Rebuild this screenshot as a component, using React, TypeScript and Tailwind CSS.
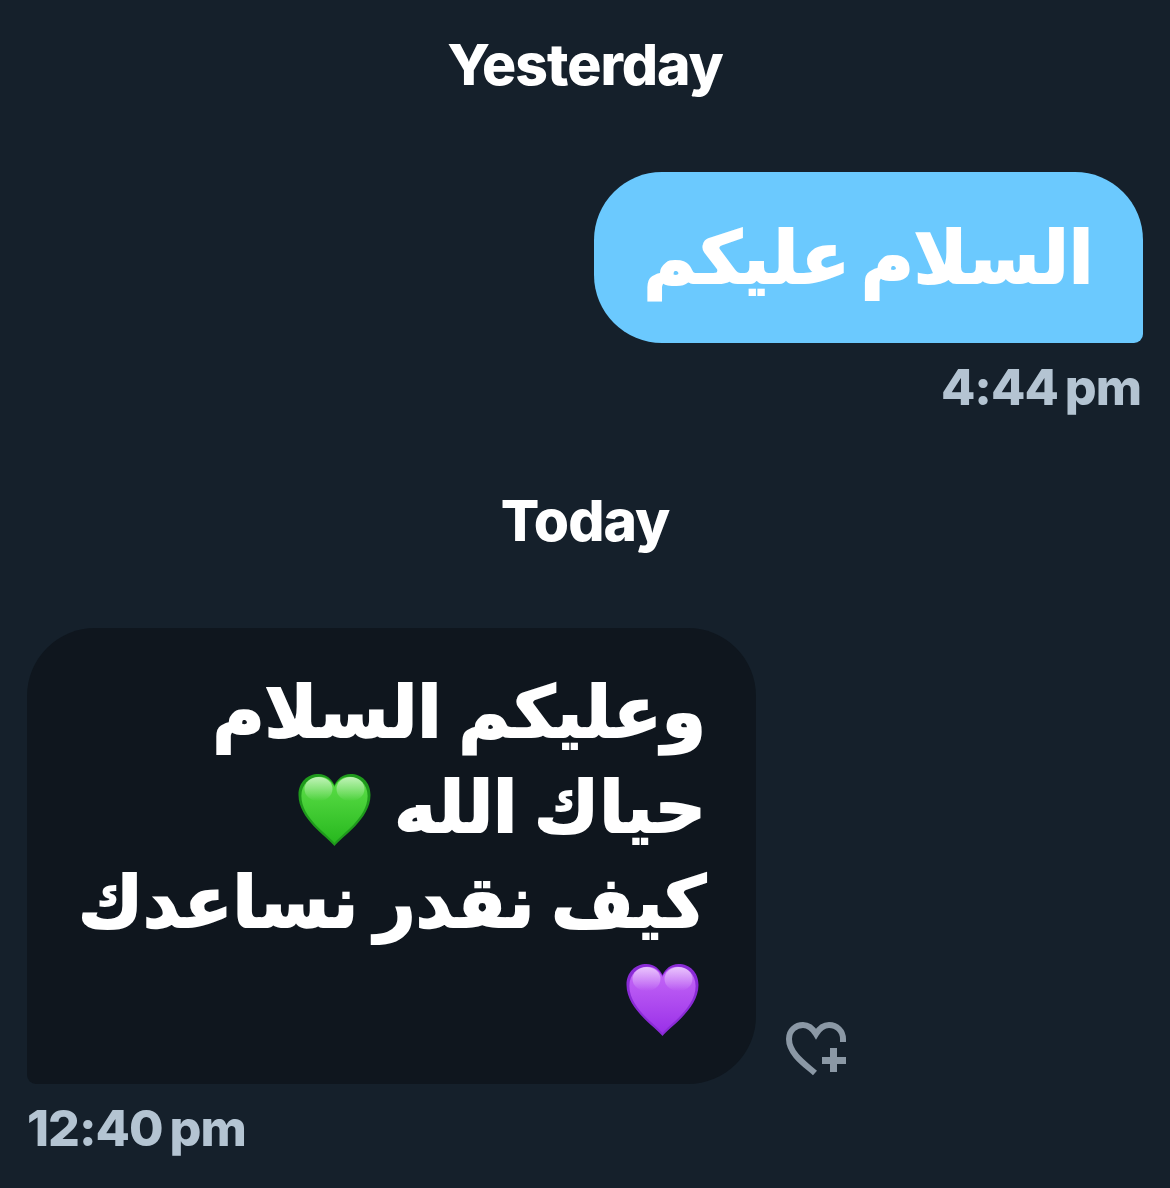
import React from "react";

const HEART = "M37 73C30 64 1 46 1 22C1 9 10 1 21 1C29 1 34 6 37 12C40 6 45 1 53 1C64 1 73 9 73 22C73 46 44 64 37 73Z";

function Heart({ edge, from, to, id, className }: { edge: string; from: string; to: string; id: string; className: string }) {
  return (
    <svg viewBox="0 0 74 74" className={className}>
      <defs>
        <linearGradient id={id} x1="0" y1="0" x2="0" y2="1">
          <stop offset="0" stopColor={from} />
          <stop offset="1" stopColor={to} />
        </linearGradient>
        <linearGradient id={`${id}h`} x1="0" y1="0" x2="0" y2="1">
          <stop offset="0" stopColor="#ffffff" stopOpacity="0.6" />
          <stop offset="1" stopColor="#ffffff" stopOpacity="0" />
        </linearGradient>
      </defs>
      <path d={HEART} fill={edge} />
      <path d={HEART} fill={`url(#${id})`} transform="translate(37 35) scale(0.92 0.92) translate(-37 -35)" />
      <ellipse cx="21" cy="16" rx="14" ry="12" fill={`url(#${id}h)`} />
      <ellipse cx="53" cy="16" rx="14" ry="12" fill={`url(#${id}h)`} />
    </svg>
  );
}

export default function App() {
  return (
    <div
      className="w-[1170px] h-[1188px] bg-[#15202b] overflow-hidden flex flex-col text-white"
      style={{ fontFamily: '"Inter","Noto Sans","DejaVu Sans",sans-serif' }}
    >
      <div className="mt-[32px] h-[64px] flex items-center justify-center text-[57px] font-extrabold leading-none tracking-[-1px]">Yesterday</div>
      <div
        className="mt-[76px] mr-[27px] self-end w-[549px] h-[171px] bg-[#6bc9fe] rounded-[68px] rounded-br-[9px] flex items-center justify-center text-[72px] font-bold [word-spacing:-14px] [-webkit-text-stroke:2px_white]"
        dir="rtl"
        style={{ fontFamily: '"DejaVu Sans",sans-serif' }}
      >
        السلام عليكم
      </div>
      <div className="mt-[12px] mr-[29px] self-end text-[#b4c4d2] text-[50px] font-extrabold leading-[64px] tracking-[-1px] [word-spacing:-3px]">4:44 pm</div>
      <div className="mt-[69px] h-[64px] flex items-center justify-center text-[57px] font-extrabold leading-none tracking-[-1px]">Today</div>
      <div className="mt-[76px] ml-[27px] flex items-end">
        <div
          className="w-[729px] h-[456px] bg-[#0f161e] rounded-[68px] rounded-bl-[9px] pr-[50px] pt-[37px] text-[71px] font-bold leading-[95px] [word-spacing:-8px] [-webkit-text-stroke:2px_white]"
          dir="rtl"
          style={{ fontFamily: '"DejaVu Sans",sans-serif' }}
        >
          <div className="h-[95px]">وعليكم السلام</div>
          <div className="h-[95px] flex items-center gap-[22px]">
            حياك الله
            <Heart id="gg" edge="#1f9a1c" from="#5fe04a" to="#27b81e" className="w-[75px] h-[74px] mt-[5px]" />
          </div>
          <div className="h-[95px]">كيف نقدر نساعدك</div>
          <div className="h-[95px] flex items-center pr-[6px]">
            <Heart id="gp" edge="#8a2bd6" from="#c76bf8" to="#9a30e8" className="w-[75px] h-[74px] mt-[5px]" />
          </div>
        </div>
        <svg viewBox="0 0 60 54" className="ml-[30px] mb-[8px] w-[60px] h-[54px]" fill="none" stroke="#8b98a5" strokeWidth="6">
          <path d="M29 51C20 43 3 32 3 17C3 8 10 3 17 3C23 3 27 7 30 12C33 7 37 3 43 3C51 3 57 9 57 17V20" />
          <path d="M47.5 26V50M36 38.5H60" strokeWidth="7" />
        </svg>
      </div>
      <div className="mt-[12px] ml-[27px] text-[#b4c4d2] text-[50px] font-extrabold leading-[64px] tracking-[-1px] [word-spacing:-3px]">12:40 pm</div>
    </div>
  );
}
